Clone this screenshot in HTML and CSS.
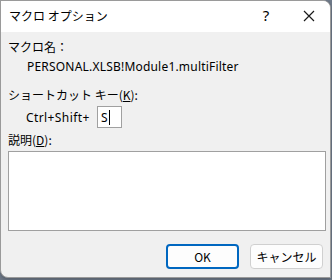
FILE: index.html
```html
<!DOCTYPE html>
<html lang="ja">
<head>
  <meta charset="UTF-8">
  <title>マクロ オプション</title>
  <link rel="stylesheet" href="styles.css">
</head>
<body>
  <div class="dialog">
    <div class="titlebar">
      <span class="title">マクロ オプション</span>
      <span class="help">?</span>
      <span class="close">
        <svg width="12" height="12" viewBox="0 0 12 12"><path d="M1 1 L11 11 M11 1 L1 11" stroke="#1a1a1a" stroke-width="1.2" fill="none"/></svg>
      </span>
    </div>

    <div class="content">
      <div class="label">マクロ名：</div>
      <div class="macro-name">PERSONAL.XLSB!Module1.multiFilter</div>

      <div class="label shortcut-label">ショートカット キー(<u>K</u>):</div>
      <div class="shortcut">
        <span class="keys">Ctrl+Shift+</span>
        <span class="keybox">S<span class="caret"></span></span>
      </div>

      <div class="label desc-label">説明(<u>D</u>):</div>
      <div class="desc"></div>

      <div class="buttons">
        <button class="btn btn-ok">OK</button>
        <button class="btn">キャンセル</button>
      </div>
    </div>
  </div>
</body>
</html>
```

FILE: styles.css
```css
html, body {
  margin: 0;
  padding: 0;
}
body {
  width: 332px;
  height: 280px;
  background: #6f7a8a;
  font-family: "Noto Sans", "Noto Sans CJK JP", sans-serif;
  font-size: 12px;
  color: #000;
  overflow: hidden;
}
.dialog {
  width: 329px;
  height: 276px;
  background: #f0f0f0;
  border: 1px solid #9a9a9a;
  border-radius: 0 8px 0 8px;
  overflow: hidden;
  box-shadow: 0 2px 4px rgba(0, 0, 0, 0.25);
}
.titlebar {
  height: 31px;
  background: #fff;
  display: flex;
  align-items: center;
  padding-left: 8px;
  box-sizing: border-box;
  padding-bottom: 3px;
}
.title {
  flex: 1;
  font-family: "Noto Sans CJK JP", sans-serif;
  font-size: 12px;
}
.help {
  width: 44px;
  text-align: center;
  font-size: 15px;
}
.close {
  width: 42px;
  display: flex;
  justify-content: center;
  padding-top: 2px;
}
.content {
  padding: 6px 6px 0 7px;
}
.label {
  font-family: "Noto Sans CJK JP", sans-serif;
  line-height: 17px;
}
.macro-name {
  padding-left: 19px;
  margin-top: 3px;
  line-height: 17px;
  letter-spacing: 0.2px;
}
.shortcut-label {
  margin-top: 11px;
}
.shortcut {
  display: flex;
  align-items: center;
  padding-left: 18px;
  margin-top: 3px;
}
.keys {
  width: 71px;
  letter-spacing: 0.4px;
}
.keybox {
  width: 20px;
  height: 20px;
  background: #fff;
  border: 1px solid #a0a0a0;
  display: flex;
  align-items: center;
  padding-left: 3px;
  box-sizing: content-box;
}
.caret {
  width: 1px;
  height: 15px;
  background: #000;
  margin-left: 1px;
}
.desc-label {
  margin-top: 3px;
}
.desc {
  height: 78px;
  margin-top: 3px;
  background: #fff;
  border: 1px solid #a0a0a0;
  width: 316px;
}
.buttons {
  display: flex;
  justify-content: flex-end;
  gap: 11px;
  margin-top: 13px;
  padding-right: 1px;
}
.btn {
  width: 73px;
  height: 25px;
  font-family: "Noto Sans CJK JP", sans-serif;
  font-size: 12px;
  background: #fdfdfd;
  border: 1px solid #d0d0d0;
  border-radius: 4px;
  padding: 0;
}
.btn-ok {
  border: 2px solid #0067c0;
}
```
